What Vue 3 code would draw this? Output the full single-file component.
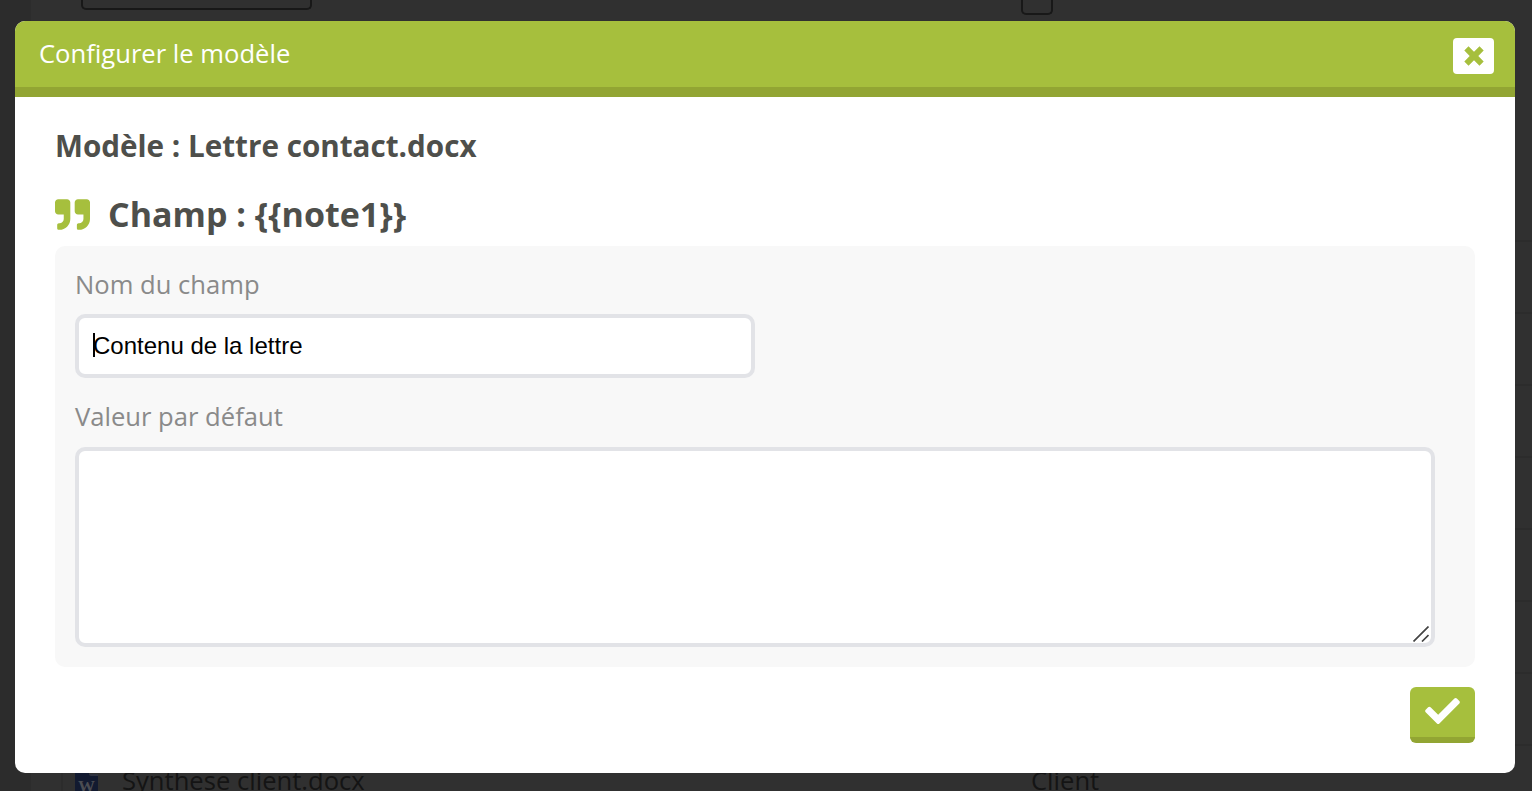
<template>
  <div class="screen">
    <div class="page">
      <div class="toolbar">
        <div class="toolbar-select"></div>
        <div class="toolbar-check"></div>
      </div>
      <div class="list">
        <div v-for="n in 8" :key="n" class="list-row"></div>
        <div class="list-row file-row">
          <svg class="word-icon" viewBox="0 0 23 32">
            <path class="word-sheet" d="M0 2a2 2 0 0 1 2-2h12v8h9v22a2 2 0 0 1-2 2H2a2 2 0 0 1-2-2z" />
            <path class="word-fold" d="M14 8h9v2h-7a2 2 0 0 1-2-2z" />
            <text class="word-mark" x="11.500" y="26" text-anchor="middle">W</text>
          </svg>
          <span class="file-name">Synthese client.docx</span>
          <span class="file-type">Client</span>
        </div>
      </div>
    </div>

    <div class="modal">
      <div class="modal-header">
        <span class="modal-title">Configurer le modèle</span>
        <button class="close" type="button" aria-label="Fermer">
          <svg viewBox="0 0 20 20">
            <path d="M4.500 .3 10 5.700 15.500 .3 19.700 4.500 14.300 10 19.700 15.500 15.500 19.700 10 14.300 4.500 19.700 .3 15.500 5.700 10 .3 4.500z" />
          </svg>
        </button>
      </div>

      <div class="modal-body">
        <h2>{{ template }}</h2>
        <h1>
          <svg class="quote" viewBox="0 0 512 448">
            <path d="M464 0H336c-26.500 0-48 21.500-48 48v128c0 26.500 21.500 48 48 48h80v64c0 35.300-28.700 64-64 64h-8c-13.300 0-24 10.700-24 24v48c0 13.300 10.700 24 24 24h8c88.400 0 160-71.600 160-160V48c0-26.500-21.500-48-48-48zM176 0H48C21.500 0 0 21.500 0 48v128c0 26.500 21.500 48 48 48h80v64c0 35.300-28.700 64-64 64h-8c-13.300 0-24 10.700-24 24v48c0 13.300 10.700 24 24 24h8c88.400 0 160-71.600 160-160V48c0-26.500-21.500-48-48-48z" />
          </svg>
          <span>{{ field }}</span>
        </h1>

        <div class="panel">
          <label for="name">Nom du champ</label>
          <div class="name-field">
            <input id="name" v-model="name" type="text">
            <span class="caret"></span>
          </div>
          <label for="value">Valeur par défaut</label>
          <div class="value-field">
            <textarea id="value" v-model="value"></textarea>
            <svg class="grip" viewBox="0 0 16 16">
              <path d="M.5 15.500 15.500 .5M9 15.500 15.500 9" />
            </svg>
          </div>
        </div>

        <div class="actions">
          <button class="submit" type="button" aria-label="Valider">
            <svg viewBox="0 0 512 384">
              <path d="M173.900 375.400 7.500 209c-10-10-10-26.200 0-36.200l36.200-36.200c10-10 26.200-10 36.200 0L192 248.700 432.100 8.600c10-10 26.200-10 36.200 0l36.200 36.200c10 10 10 26.200 0 36.200L210.100 375.400c-10 10-26.200 10-36.200 0z" />
            </svg>
          </button>
        </div>
      </div>
    </div>
  </div>
</template>

<script setup>
import { ref } from 'vue'

const template = 'Modèle : Lettre contact.docx'
const field = 'Champ : {{note1}}'
const name = ref('Contenu de la lettre')
const value = ref('')
</script>

<style>
body {
  margin: 0;
  overflow: hidden;
}
</style>

<style scoped>
.screen {
  position: relative;
  box-sizing: border-box;
  width: 100%;
  height: 791px;
  padding-left: 31px;
  overflow: hidden;
  background: #2c2c2c;
  font-family: "Open Sans", sans-serif;
}

.page {
  background: #303030;
}

.toolbar {
  display: flex;
  align-items: flex-start;
  justify-content: space-between;
  box-sizing: border-box;
  height: 170px;
  padding: 0 479px 0 50px;
}

.toolbar-select,
.toolbar-check {
  box-sizing: border-box;
  border: 2px solid #181818;
  border-top: 0;
  border-radius: 0 0 5px 5px;
}

.toolbar-select {
  width: 231px;
  height: 10px;
}

.toolbar-check {
  width: 32px;
  height: 15px;
}

.list {
  margin-left: 30px;
  border-left: 2px solid #2c2c2c;
}

.list-row {
  box-sizing: border-box;
  height: 72px;
  border-bottom: 2px solid #2c2c2c;
}

.file-row {
  display: flex;
  align-items: center;
  padding-bottom: 2px;
  color: #141414;
  font-size: 25.6px;
}

.word-icon {
  width: 23px;
  height: 32px;
  margin: 4px 0 0 12px;
}

.word-sheet {
  fill: #121a30;
}

.word-fold {
  fill: #2f3340;
}

.word-mark {
  fill: #4a4c52;
  font: bold 17px "Liberation Serif", serif;
}

.file-name {
  width: 909px;
  margin-left: 24px;
}

.modal {
  position: absolute;
  top: 21px;
  left: 15px;
  width: 1500px;
  height: 752px;
  overflow: hidden;
  border-radius: 10px;
  background: #fff;
}

.modal-header {
  display: flex;
  align-items: flex-start;
  justify-content: space-between;
  box-sizing: border-box;
  height: 76px;
  padding: 0 21px 0 24px;
  border-bottom: 10px solid #92a533;
  background: #a6bf3d;
}

.modal-title {
  color: #fff;
  font-size: 25.6px;
  line-height: 65px;
}

.close {
  display: flex;
  align-items: center;
  justify-content: center;
  box-sizing: border-box;
  width: 41px;
  height: 36px;
  margin-top: 17px;
  padding: 0;
  border: 0;
  border-radius: 4px;
  background: #fff;
}

.close svg {
  width: 20px;
  height: 20px;
  fill: #a6bf3d;
}

.modal-body {
  padding: 27px 40px 0;
}

h1,
h2 {
  margin: 0;
  color: #4e4f4b;
  font-weight: 700;
}

h2 {
  font-size: 29.65px;
  line-height: 44px;
}

h1 {
  display: flex;
  align-items: center;
  gap: 18px;
  height: 48px;
  margin-top: 22px;
  font-size: 34px;
  line-height: 48px;
}

.quote {
  width: 35px;
  height: 31px;
  margin-top: 1px;
  fill: #a6bf3d;
}

.panel {
  display: flex;
  flex-direction: column;
  box-sizing: border-box;
  height: 421px;
  margin-top: 8px;
  padding: 21px 20px 20px;
  border-radius: 10px;
  background: #f8f8f8;
}

label {
  color: #8a8a8a;
  font-size: 25.6px;
  line-height: 36px;
}

.name-field {
  position: relative;
  width: 680px;
  height: 64px;
  margin: 11px 0 21px;
}

.value-field {
  position: relative;
  width: 1360px;
  height: 200px;
  margin-top: 12px;
}

input,
textarea {
  display: block;
  box-sizing: border-box;
  width: 100%;
  height: 100%;
  padding: 0 14px;
  border: 4px solid #e2e3e7;
  border-radius: 10px;
  outline: none;
  background: #fff;
  color: #000;
  font: 24px "Liberation Sans", sans-serif;
  resize: none;
}

.caret {
  position: absolute;
  top: 19px;
  left: 18px;
  width: 2px;
  height: 24px;
  background: #000;
}

.grip {
  position: absolute;
  right: 6px;
  bottom: 5px;
  width: 16px;
  height: 16px;
  fill: none;
  stroke: #444;
  stroke-width: 1.700;
}

.actions {
  display: flex;
  justify-content: flex-end;
  margin-top: 20px;
}

.submit {
  display: flex;
  align-items: flex-start;
  justify-content: center;
  box-sizing: border-box;
  width: 65px;
  height: 56px;
  padding: 11px 0 0;
  border: 0;
  border-bottom: 6px solid #92a533;
  border-radius: 6px;
  background: #a6bf3d;
}

.submit svg {
  width: 35px;
  height: 26px;
  fill: #fff;
}
</style>
